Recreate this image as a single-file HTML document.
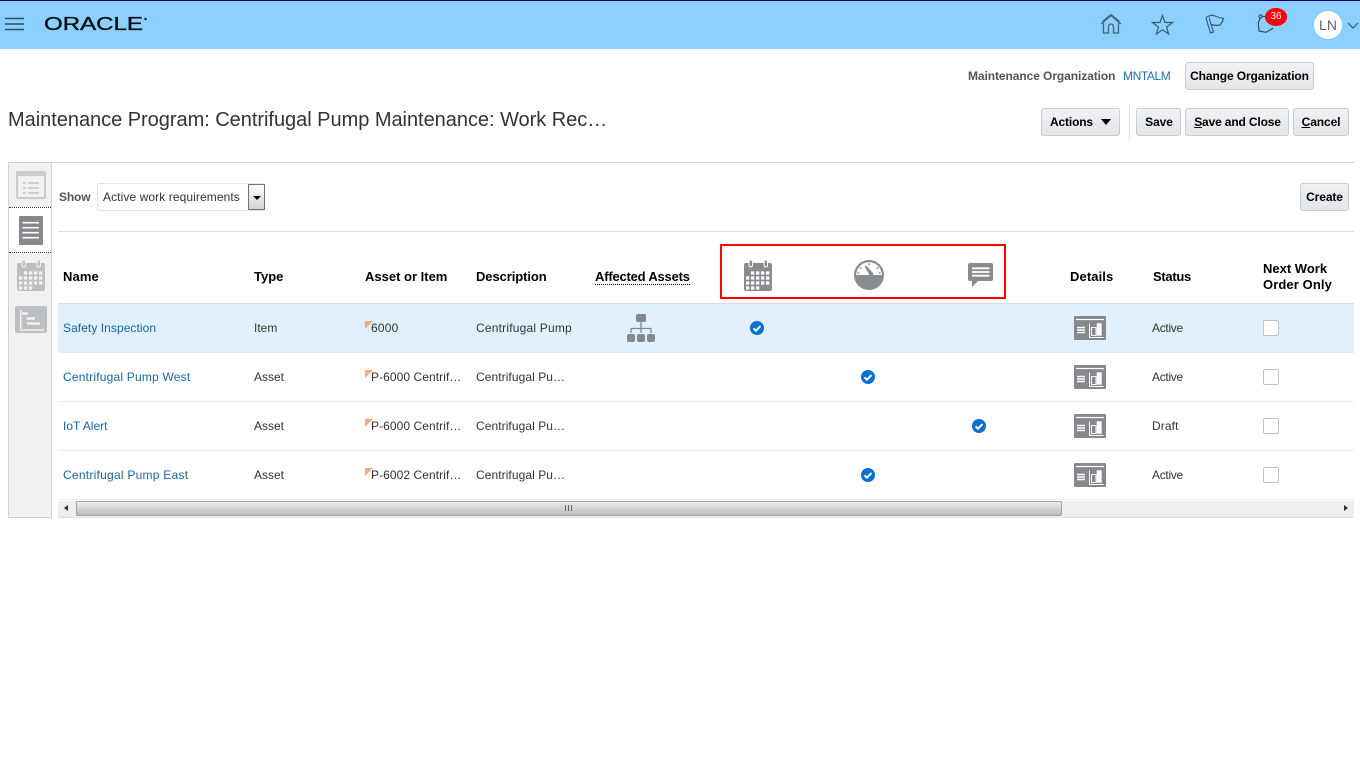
<!DOCTYPE html>
<html><head><meta charset="utf-8"><style>
html,body{margin:0;padding:0;background:#fff}
body{width:1360px;height:764px;position:relative;overflow:hidden;font-family:"Liberation Sans",Arial,sans-serif;font-size:12px;color:#333}
.a{position:absolute}
.t{position:absolute;white-space:nowrap;line-height:14px}
.b{font-weight:bold}
.h{position:absolute;white-space:nowrap;font-weight:bold;font-size:13px;line-height:16px;color:#000}
.l{color:#1766a8}
.btn{position:absolute;box-sizing:border-box;border:1px solid #c4ced7;border-radius:3px;background:linear-gradient(#eff1f3,#e3e6e9);font-weight:bold;color:#000;text-align:center;font-size:12px;line-height:26px;height:28px;white-space:nowrap;letter-spacing:-.1px}
.tri{position:absolute;width:0;height:0;border-top:8px solid #f6ab7c;border-right:8px solid transparent}
.cb{position:absolute;box-sizing:border-box;width:16px;height:16px;border:1px solid #b9c4cd;border-radius:2px;background:#fff}
svg{position:absolute;display:block}
</style></head><body>
<div class="a" style="left:0;top:0;width:1360px;height:49px;background:#8bd0ff"></div>
<div class="a" style="left:0;top:0;width:1360px;height:1px;background:#00007a"></div>
<svg style="left:5px;top:17px" width="20" height="14"><path d="M0 1.500h19M0 7h19M0 12.500h19" stroke="#2f4d66" stroke-width="1.600"/></svg>
<svg style="left:43px;top:13px" width="106" height="20"><text x="1" y="17" font-family="Liberation Sans" font-size="18" stroke="#0b0f14" stroke-width=".35" textLength="99" lengthAdjust="spacingAndGlyphs" fill="#0b0f14">ORACLE</text><circle cx="102.500" cy="6" r="1.200" fill="#111"/></svg>
<svg style="left:1100px;top:14px" width="22" height="20" fill="none" stroke="#3f6480" stroke-width="1.300"><path d="M1 10 11 1.500 21 10M2.500 7.500 11 0.500l8.500 7M3.500 9v10h5v-6q0-3 2.500-3t2.500 3v6h5V9"/></svg>
<svg style="left:1151px;top:14px" width="23" height="21" fill="none" stroke="#3f5a70" stroke-width="1.200"><path d="M11.500 1.500 14 8.500h7.500l-6 4.600 2.200 7-6.200-4.300-6.200 4.300 2.200-7-6-4.600H9z"/></svg>
<svg style="left:1204px;top:14px" width="22" height="21" fill="none" stroke="#3f5a70" stroke-width="1.200"><path d="M2 4 6.500 19 9.500 18 5 3.500M2 4Q6 0 11 2t8.500 2.500Q18 9 16 11q-4 1-8.500-.5"/></svg>
<svg style="left:1257px;top:13px" width="26" height="22" fill="none" stroke="#33505f" stroke-width="1.200"><circle cx="3.500" cy="3.500" r="1.600"/><path d="M5 3.500h3M3 5 1.300 10l.7 8 7 1.300 7-4"/></svg>
<div class="a" style="left:1265px;top:8px;width:22px;height:18px;border-radius:11px/9px;background:#fb0007;color:#fff;font-size:10px;line-height:18px;text-align:center">36</div>
<div class="a" style="left:1314px;top:11px;width:28px;height:28px;border-radius:50%;background:#fff;color:#666;font-size:14px;line-height:28px;text-align:center">LN</div>
<svg style="left:1347px;top:22px" width="12" height="8" fill="none" stroke="#3f5a70" stroke-width="1.200"><path d="M1 1l5 5 5-5"/></svg>

<div class="t b" style="left:968px;top:69px;color:#555;letter-spacing:-.08px">Maintenance Organization</div>
<div class="t" style="left:1123px;top:69px;color:#1a6fc0;letter-spacing:-.4px">MNTALM</div>
<div class="btn" style="left:1185px;top:62px;width:129px">Change Organization</div>

<div class="t" style="left:8px;top:108px;font-size:20px;line-height:24px;color:#333;letter-spacing:-.03px">Maintenance Program: Centrifugal Pump Maintenance: Work Rec…</div>
<div class="btn" style="left:1041px;top:108px;width:79px;text-align:left;padding-left:8px;letter-spacing:-.15px">Actions</div>
<div class="a" style="left:1101px;top:119px;width:0;height:0;border-left:5px solid transparent;border-right:5px solid transparent;border-top:6.500px solid #000"></div>
<div class="a" style="left:1129px;top:105px;width:1px;height:34px;background:#dcdfe2"></div>
<div class="btn" style="left:1136px;top:108px;width:45px;padding-left:1px">Save</div>
<div class="btn" style="left:1185px;top:108px;width:104px;padding-left:1px;letter-spacing:-.15px"><u>S</u>ave and Close</div>
<div class="btn" style="left:1293px;top:108px;width:56px"><u>C</u>ancel</div>

<div class="a" style="left:8px;top:162px;width:1346px;height:1px;background:#cfd2d4"></div>
<div class="a" style="left:8px;top:162px;box-sizing:border-box;width:44px;height:356px;background:#f1f1f1;border:1px solid #cfd2d4"></div>
<div class="a" style="left:9px;top:207px;width:42px;height:44px;background:#fff;border-top:1px dotted #333;border-bottom:1px dotted #333"></div>
<svg style="left:16px;top:171px" width="30" height="29"><rect width="30" height="28" rx="2" fill="#c9ccce"/><rect x="2" y="5" width="26" height="21" fill="#f1f1f1"/><path d="M7 12h3M12 12h11M7 17h3M12 17h11M7 22h3M12 22h11" stroke="#c2c5c7" stroke-width="1.500"/></svg>
<svg style="left:19px;top:216px" width="24" height="29"><rect width="24" height="29" fill="#85898d"/><path d="M3.500 6.700h16.500M3.500 11.700h16.500M3.500 16.700h16.500M3.500 21.700h16.500" stroke="#fff" stroke-width="1.600"/></svg>
<svg style="left:17px;top:260px" width="28" height="31"><path d="M2 3h24a2 2 0 0 1 2 2v24a2 2 0 0 1-2 2H2a2 2 0 0 1-2-2V5a2 2 0 0 1 2-2z" fill="#bcc0c3"/><rect x="5" y="0" width="3.500" height="7" rx="1.700" fill="#bcc0c3" stroke="#f1f1f1"/><rect x="20" y="0" width="3.500" height="7" rx="1.700" fill="#bcc0c3" stroke="#f1f1f1"/><path d="M7 13H26M2 18H26M2 23H26M2 28H15.500" stroke="#f1f1f1" stroke-width="3.300" stroke-dasharray="3.300 1.700"/></svg>
<svg style="left:15px;top:306px" width="32" height="27"><rect width="32" height="27" rx="2" fill="#bcc0c3"/><path d="M5.700 4v20H29" stroke="#f1f1f1" stroke-width="1.500" fill="none"/><path d="M7 7.500h6M11.700 12.500h8.300M12 17.500h13" stroke="#f1f1f1" stroke-width="2.500"/></svg>

<div class="t b" style="left:59px;top:190px;color:#555;letter-spacing:-.15px">Show</div>
<div class="a" style="left:97px;top:183px;box-sizing:border-box;width:168px;height:28px;border:1px solid #dfe3e6;border-radius:2px;background:#fff"></div>
<div class="t" style="left:103px;top:190px;color:#333;letter-spacing:.09px">Active work requirements</div>
<div class="a" style="left:248px;top:184px;box-sizing:border-box;width:17px;height:26px;border:1px solid #6d7276;background:linear-gradient(#fff,#cfd1d3)"></div>
<div class="a" style="left:252.500px;top:195.500px;width:0;height:0;border-left:4px solid transparent;border-right:4px solid transparent;border-top:4px solid #000"></div>
<div class="btn" style="left:1300px;top:183px;width:49px">Create</div>
<div class="a" style="left:58px;top:231px;width:1296px;height:1px;background:#d9e0e6"></div>

<div class="h" style="left:63px;top:269px;letter-spacing:.1px">Name</div>
<div class="h" style="left:254px;top:269px">Type</div>
<div class="h" style="left:365px;top:269px">Asset or Item</div>
<div class="h" style="left:476px;top:269px;letter-spacing:-.08px">Description</div>
<div class="h" style="left:595px;top:269px;border-bottom:1px dotted #000;line-height:15px;letter-spacing:-.2px">Affected Assets</div>
<div class="h" style="left:1070px;top:269px;letter-spacing:.1px">Details</div>
<div class="h" style="left:1153px;top:269px;letter-spacing:-.3px">Status</div>
<div class="h" style="left:1263px;top:261px">Next Work<br><span style="letter-spacing:.1px">Order Only</span></div>

<div class="a" style="left:720px;top:244px;box-sizing:border-box;width:286px;height:55px;border:2px solid #f00"></div>
<svg style="left:744px;top:260px" width="28" height="31"><path d="M2 3h24a2 2 0 0 1 2 2v24a2 2 0 0 1-2 2H2a2 2 0 0 1-2-2V5a2 2 0 0 1 2-2z" fill="#888c90"/><rect x="5" y="0" width="3.500" height="7" rx="1.700" fill="#888c90" stroke="#fff"/><rect x="20" y="0" width="3.500" height="7" rx="1.700" fill="#888c90" stroke="#fff"/><path d="M7 13H26M2 18H26M2 23H26M2 28H15.500" stroke="#fff" stroke-width="3.300" stroke-dasharray="3.300 1.700"/></svg>
<svg style="left:854px;top:260px" width="30" height="30"><circle cx="15" cy="15" r="15" fill="#888c90"/><path d="M2.200 15a12.800 12.800 0 0 1 25.600 0z" fill="#fff"/><path d="M10.500 6.200 12.200 5.700 19.500 13.500 19 15H15.500z" fill="#888c90"/><path d="M15 3.500v1.800M6 7.500l1.200 1.200M24 7.500l-1.200 1.200M3.500 13h1.800M24.700 13h1.800" stroke="#888c90" stroke-width="1.500"/></svg>
<svg style="left:968px;top:263px" width="26" height="25"><path d="M2 0h21a2 2 0 0 1 2 2v14a2 2 0 0 1-2 2H10l-6 6v-6H2a2 2 0 0 1-2-2V2a2 2 0 0 1 2-2z" fill="#888c90"/><path d="M4 5.300h17.500M4 9h17.500M4 12.700h17.500" stroke="#fff" stroke-width="1.800"/></svg>

<div class="a" style="left:58px;top:303px;width:1296px;height:1px;background:#d9dcde"></div>
<div class="a" style="left:58px;top:304px;width:1296px;height:48px;background:#e2f0fd"></div>
<div class="a" style="left:58px;top:401px;width:1296px;height:1px;background:#ececec"></div>
<div class="a" style="left:58px;top:450px;width:1296px;height:1px;background:#ececec"></div>
<div class="a" style="left:58px;top:352px;width:1296px;height:1px;background:#ececec"></div>
<div class="a" style="left:58px;top:499px;width:1296px;height:1px;background:#ececec"></div>

<div class="t l" style="left:63px;top:321px;letter-spacing:.06px">Safety Inspection</div>
<div class="t" style="left:254px;top:321px">Item</div>
<div class="tri" style="left:365px;top:321px"></div>
<div class="t" style="left:371px;top:321px;letter-spacing:.2px">6000</div>
<div class="t" style="left:476px;top:321px;letter-spacing:.2px">Centrifugal Pump</div>
<svg style="left:627px;top:314px" width="28" height="28" fill="#85898d"><rect x="9" y="0" width="10" height="8" rx="2"/><rect x="0" y="20" width="8" height="8" rx="2"/><rect x="10" y="20" width="8" height="8" rx="2"/><rect x="20" y="20" width="8" height="8" rx="2"/><path d="M14 8v11M4 19v-4.500h20V19" fill="none" stroke="#85898d" stroke-width="1.300"/></svg>
<div class="t" style="left:1152px;top:321px;letter-spacing:-.3px">Active</div>

<div class="t l" style="left:63px;top:370px;letter-spacing:.2px">Centrifugal Pump West</div>
<div class="t" style="left:254px;top:370px">Asset</div>
<div class="tri" style="left:365px;top:370px"></div>
<div class="t" style="left:371px;top:370px;letter-spacing:.07px">P-6000 Centrif…</div>
<div class="t" style="left:476px;top:370px;letter-spacing:.07px">Centrifugal Pu…</div>
<div class="t" style="left:1152px;top:370px;letter-spacing:-.3px">Active</div>

<div class="t l" style="left:63px;top:419px">IoT Alert</div>
<div class="t" style="left:254px;top:419px">Asset</div>
<div class="tri" style="left:365px;top:419px"></div>
<div class="t" style="left:371px;top:419px;letter-spacing:.07px">P-6000 Centrif…</div>
<div class="t" style="left:476px;top:419px;letter-spacing:.07px">Centrifugal Pu…</div>
<div class="t" style="left:1152px;top:419px;letter-spacing:.1px">Draft</div>

<div class="t l" style="left:63px;top:468px;letter-spacing:.25px">Centrifugal Pump East</div>
<div class="t" style="left:254px;top:468px">Asset</div>
<div class="tri" style="left:365px;top:468px"></div>
<div class="t" style="left:371px;top:468px;letter-spacing:.07px">P-6002 Centrif…</div>
<div class="t" style="left:476px;top:468px;letter-spacing:.07px">Centrifugal Pu…</div>
<div class="t" style="left:1152px;top:468px;letter-spacing:-.3px">Active</div>

<svg style="left:750px;top:321px" width="14" height="14"><circle cx="7" cy="7" r="7" fill="#0a6fd0"/><path d="M3.500 7.300l2.400 2.400 4.600-4.600" fill="none" stroke="#fff" stroke-width="2"/></svg>
<svg style="left:861px;top:370px" width="14" height="14"><circle cx="7" cy="7" r="7" fill="#0a6fd0"/><path d="M3.500 7.300l2.400 2.400 4.600-4.600" fill="none" stroke="#fff" stroke-width="2"/></svg>
<svg style="left:972px;top:419px" width="14" height="14"><circle cx="7" cy="7" r="7" fill="#0a6fd0"/><path d="M3.500 7.300l2.400 2.400 4.600-4.600" fill="none" stroke="#fff" stroke-width="2"/></svg>
<svg style="left:861px;top:468px" width="14" height="14"><circle cx="7" cy="7" r="7" fill="#0a6fd0"/><path d="M3.500 7.300l2.400 2.400 4.600-4.600" fill="none" stroke="#fff" stroke-width="2"/></svg>

<svg style="left:1074px;top:316px" width="32" height="24"><rect width="32" height="24" rx="1" fill="#85898d"/><path d="M2 3.500h28" stroke="#fff" stroke-width="1.300"/><path d="M3 11.500h8M3 14h8M3 16.500h8" stroke="#fff" stroke-width="1.500"/><path d="M15.500 7.500v14H29.500" fill="none" stroke="#fff"/><rect x="17.500" y="11.500" width="4.500" height="8" fill="none" stroke="#fff"/><rect x="22.700" y="7.300" width="5" height="12.400" fill="#fff"/></svg>
<svg style="left:1074px;top:365px" width="32" height="24"><rect width="32" height="24" rx="1" fill="#85898d"/><path d="M2 3.500h28" stroke="#fff" stroke-width="1.300"/><path d="M3 11.500h8M3 14h8M3 16.500h8" stroke="#fff" stroke-width="1.500"/><path d="M15.500 7.500v14H29.500" fill="none" stroke="#fff"/><rect x="17.500" y="11.500" width="4.500" height="8" fill="none" stroke="#fff"/><rect x="22.700" y="7.300" width="5" height="12.400" fill="#fff"/></svg>
<svg style="left:1074px;top:414px" width="32" height="24"><rect width="32" height="24" rx="1" fill="#85898d"/><path d="M2 3.500h28" stroke="#fff" stroke-width="1.300"/><path d="M3 11.500h8M3 14h8M3 16.500h8" stroke="#fff" stroke-width="1.500"/><path d="M15.500 7.500v14H29.500" fill="none" stroke="#fff"/><rect x="17.500" y="11.500" width="4.500" height="8" fill="none" stroke="#fff"/><rect x="22.700" y="7.300" width="5" height="12.400" fill="#fff"/></svg>
<svg style="left:1074px;top:463px" width="32" height="24"><rect width="32" height="24" rx="1" fill="#85898d"/><path d="M2 3.500h28" stroke="#fff" stroke-width="1.300"/><path d="M3 11.500h8M3 14h8M3 16.500h8" stroke="#fff" stroke-width="1.500"/><path d="M15.500 7.500v14H29.500" fill="none" stroke="#fff"/><rect x="17.500" y="11.500" width="4.500" height="8" fill="none" stroke="#fff"/><rect x="22.700" y="7.300" width="5" height="12.400" fill="#fff"/></svg>

<div class="cb" style="left:1263px;top:320px"></div>
<div class="cb" style="left:1263px;top:369px"></div>
<div class="cb" style="left:1263px;top:418px"></div>
<div class="cb" style="left:1263px;top:467px"></div>

<div class="a" style="left:58px;top:501px;width:1296px;height:17px;background:#eeeeee;border-bottom:1px solid #dde3e8;box-sizing:border-box"></div>
<div class="a" style="left:76px;top:501px;box-sizing:border-box;width:986px;height:15px;border:1px solid #a0a2a4;border-radius:2px;background:linear-gradient(#eceded,#b9baba)"></div>
<div class="a" style="left:565px;top:505px;width:7px;height:6px;background:repeating-linear-gradient(90deg,#666 0 1px,transparent 1px 3px)"></div>
<div class="a" style="left:64px;top:505px;width:0;height:0;border-top:3.500px solid transparent;border-bottom:3.500px solid transparent;border-right:4px solid #333"></div>
<div class="a" style="left:1344px;top:505px;width:0;height:0;border-top:3.500px solid transparent;border-bottom:3.500px solid transparent;border-left:4px solid #333"></div>
</body></html>
